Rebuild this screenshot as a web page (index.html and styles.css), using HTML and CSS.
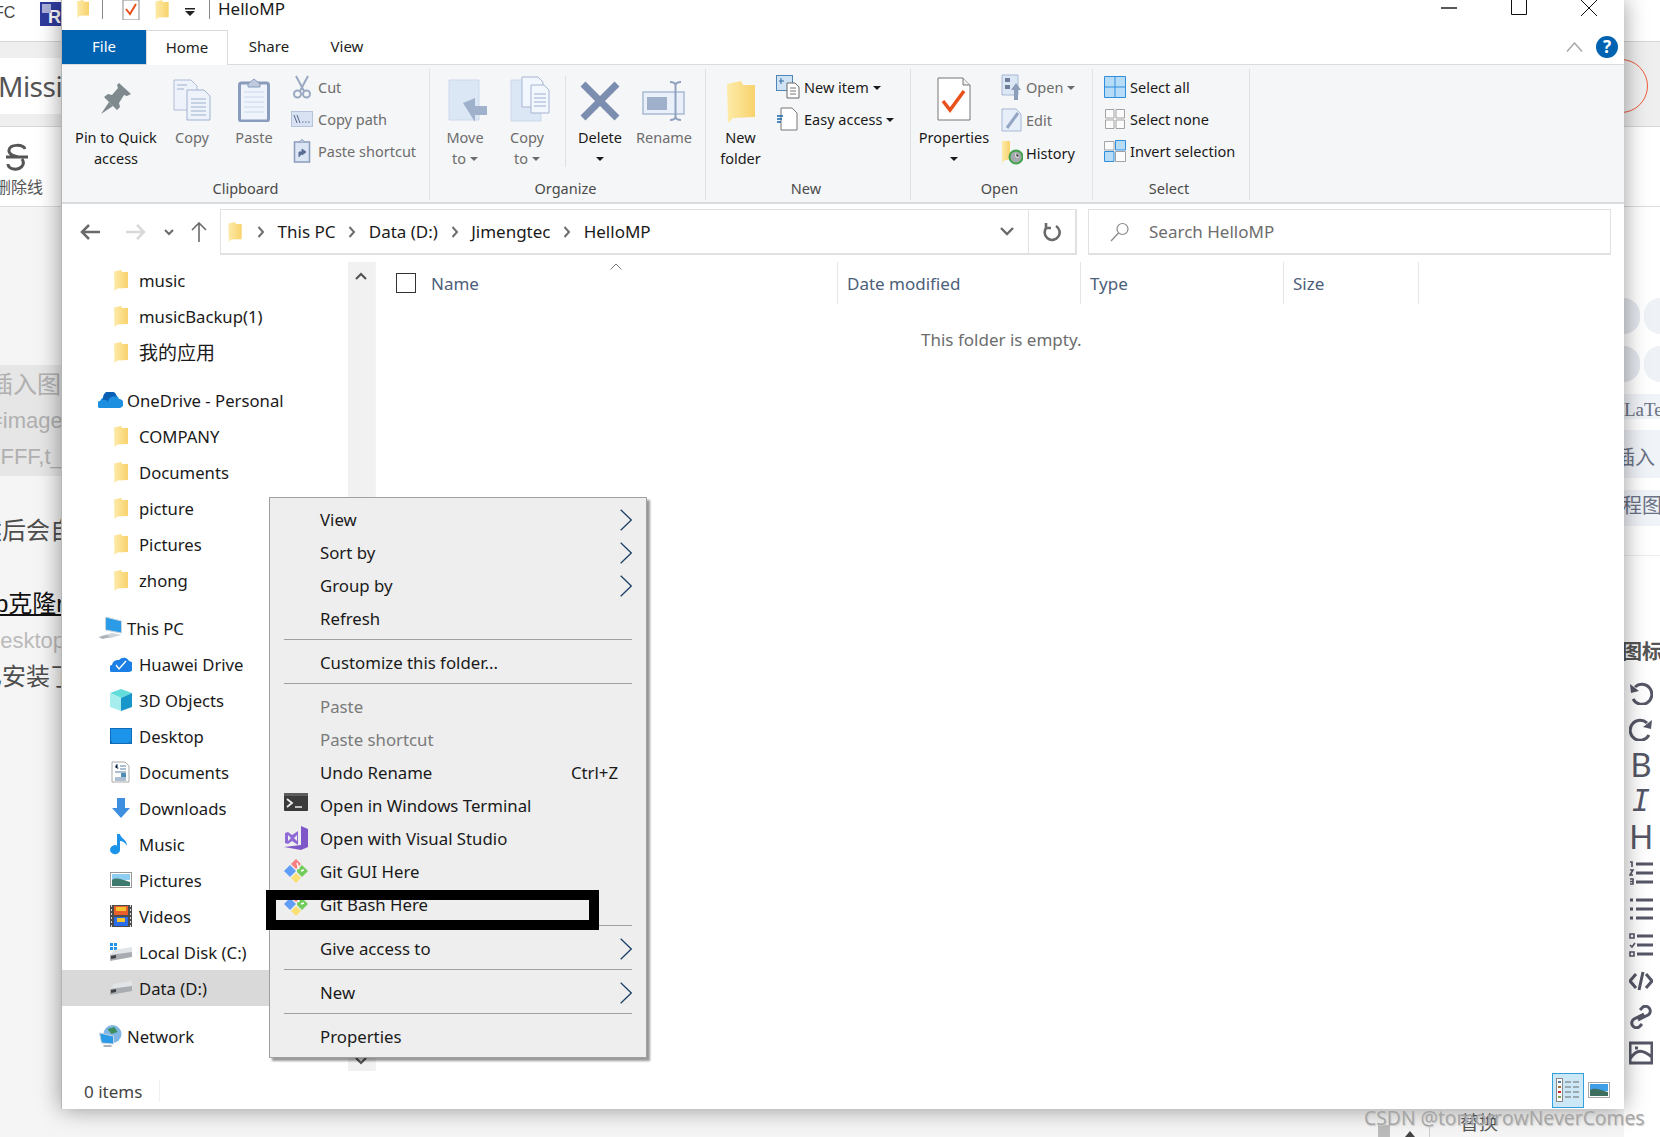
FILE: index.html
```html
<!DOCTYPE html>
<html lang="en">

<head>
    <meta charset="UTF-8">
    <title>HelloMP</title>
    <link rel="stylesheet" href="styles.css">
</head>

<body>
    <svg class="defs" aria-hidden="true">
        <defs>
            <linearGradient id="fold" x1="0" y1="0" x2="1" y2="0">
                <stop offset="0" stop-color="#fdeba9" />
                <stop offset="1" stop-color="#f8d26c" />
            </linearGradient>
            <symbol id="folder" viewBox="0 0 14 21">
                <path d="M0 1.500 L7 0 L8 2 H14 V18 L3 18.500 L0.500 21 Z" fill="url(#fold)" />
            </symbol>
            <symbol id="git" viewBox="0 0 24 24">
                <path d="M0 12 L6 6 L12 12 L6 18 Z" fill="#5f9df7" />
                <path d="M7 5 L12 0 L17 5 L12 10 Z" fill="#f87f7f" />
                <path d="M13 11 L18 6 L24 12 L18 18 L13 13 Z" fill="#72cc5c" />
                <path d="M7 19 L12 14 L17 19 L12 24 Z" fill="#fde073" />
                <path d="M13 4 L15 10 M17 12 L20 11" stroke="#fff" stroke-width="1.400" />
            </symbol>
            <symbol id="chev" viewBox="0 0 12 22">
                <path d="M0.700 0.700 L11.300 11 L0.700 21.300" fill="none" stroke="#1c3f66" stroke-width="1.300" />
            </symbol>
            <symbol id="crumb" viewBox="0 0 8 12">
                <path d="M1.500 1 L6 6 L1.500 11" fill="none" stroke="#6e6e6e" stroke-width="2" />
            </symbol>
            <symbol id="disk" viewBox="0 0 22 14">
                <path d="M4 3 L22 0 V6 L0 12 V8 Z" fill="#e2e5e8" />
                <path d="M0 8 L22 5 V10 L0 14 Z" fill="#a9adb2" />
                <path d="M1 9 L6 8 V11 L1 12 Z" fill="#3d4246" />
            </symbol>
        </defs>
    </svg>

    <!-- editor page behind the explorer window -->
    <div class="editor">
        <div class="ed-top">
            <span class="ed-fc">FC</span>
            <span class="ed-logo">R</span>
        </div>
        <div class="ed-title">
            <div class="ed-card">Missi</div>
            <div class="ed-ring"></div>
        </div>
        <div class="ed-tools">
            <div class="ed-strike">
                <svg width="24" height="28" viewBox="0 0 24 28">
                    <path d="M20 6 C18 1 5 1 4 7 C3 12 10 13 13 14 M1 14 H23 M17 16 C21 22 15 27 9 26 C6 26 3 24 3 21" fill="none" stroke="#555" stroke-width="3" />
                </svg>
                <span>删除线</span>
            </div>
        </div>
        <div class="ed-body">
            <div class="ed-left">
                <div class="ed-code">
                    <p class="cut-a">插入图片</p>
                    <p class="cut-b">=image</p>
                    <p class="cut-c">FFFF,t_</p>
                </div>
                <p class="ed-line ed-after">然后会自动</p>
                <p class="ed-line ed-clone"><u>b克隆r</u></p>
                <p class="ed-line ed-desk">desktop</p>
                <p class="ed-line ed-inst">已安装了</p>
            </div>
            <div class="ed-right">
                <div class="pill-row"><i></i><i></i></div>
                <div class="pill-row"><i></i><i></i></div>
                <div class="side-btn side-latex">LaTeX</div>
                <div class="side-btn side-insert">插入</div>
                <div class="side-btn side-flow">程图</div>
                <div class="side-rule"></div>
                <div class="side-head">图标</div>
                <div class="side-icons">
                    <svg viewBox="0 0 24 24"><path d="M6 6 A10 10 0 1 1 4 18" /><path d="M1 3 L2 12 L10 10 Z" class="solid" /></svg>
                    <svg viewBox="0 0 24 24"><path d="M18 6 A10 10 0 1 0 20 18" /><path d="M23 3 L22 12 L14 10 Z" class="solid" /></svg>
                    <b>B</b>
                    <b class="ital">I</b>
                    <b>H</b>
                    <svg viewBox="0 0 24 24"><path d="M7 3 H24 M7 12 H24 M7 21 H24" /><path d="M1 1 H3 V6 M1 9 H4 L1 14 H4 M1 18 H4 V23 H1 M1 20.500 H4" class="thin" /></svg>
                    <svg viewBox="0 0 24 24"><path d="M7 3 H24 M7 12 H24 M7 21 H24 M1 3 H4 M1 12 H4 M1 21 H4" /></svg>
                    <svg viewBox="0 0 24 24"><path d="M8 3 H24 M8 12 H24 M8 21 H24" /><path d="M1 1 H5 V5 H1 Z M1 19 H5 V23 H1 Z M1 12 L3 14 L6 10" class="thin" /></svg>
                    <svg viewBox="0 0 24 24"><path d="M7 5 L1 12 L7 19 M17 5 L23 12 L17 19 M14 3 L10 21" /></svg>
                    <svg viewBox="0 0 24 24"><path d="M9 15 L19 10 A4.500 4.500 0 0 0 14 2 L11 5 M15 9 L5 14 A4.500 4.500 0 0 0 10 22 L13 19" /></svg>
                    <svg viewBox="0 0 24 24"><path d="M1 2 H23 V22 H1 Z M1 18 C8 7 14 9 23 16 M6 7 H9" /></svg>
                </div>
            </div>
        </div>
    </div>

    <div class="watermark">CSDN @tomorrowNeverComes</div>
    <div class="replace">替换</div>
    <div class="under-bar"></div>
    <div class="under-tri"></div>
    <div class="under-rule"></div>

    <!-- explorer window -->
    <div class="window">
        <div class="titlebar">
            <div class="quick">
                <svg class="q-folder" width="14" height="18"><use href="#folder" /></svg>
                <span class="q-sep"></span>
                <svg class="q-check" width="18" height="20" viewBox="0 0 18 20">
                    <path d="M1 0 H17 V20 H1 Z" fill="#fff" stroke="#8b8b8b" />
                    <path d="M4 9 L8 14 L14 4" fill="none" stroke="#e8501c" stroke-width="2" />
                </svg>
                <svg class="q-folder2" width="14" height="20"><use href="#folder" /></svg>
                <svg class="q-drop" width="10" height="8" viewBox="0 0 10 8">
                    <path d="M0 0 H10 V1.500 H0 Z M0 3 H10 L5 8 Z" fill="#222" />
                </svg>
                <span class="q-sep"></span>
                <span class="win-name">HelloMP</span>
            </div>
            <div class="win-btns">
                <svg width="16" height="2" viewBox="0 0 16 2"><path d="M0 1 H16" stroke="#111" stroke-width="1.400" /></svg>
                <svg width="16" height="15" viewBox="0 0 16 15"><path d="M0.500 -1 H15.500 V14.500 H0.500 Z" fill="none" stroke="#111" /></svg>
                <svg width="16" height="16" viewBox="0 0 16 16"><path d="M0 0 L16 16 M16 0 L0 16" stroke="#111" /></svg>
            </div>
        </div>

        <div class="tabs">
            <div class="tab tab-file">File</div>
            <div class="tab tab-home">Home</div>
            <div class="tab tab-share">Share</div>
            <div class="tab tab-view">View</div>
            <div class="tabs-end">
                <svg width="17" height="10" viewBox="0 0 17 10"><path d="M1 9.500 L8.500 1 L16 9.500" fill="none" stroke="#a9a9a9" stroke-width="1.500" /></svg>
                <span class="help">?</span>
            </div>
        </div>

        <div class="ribbon">
            <div class="group g-clip">
                <div class="g-body">
                    <div class="big w-pin">
                        <svg width="32" height="32" viewBox="0 0 32 32">
                            <path d="M19 1 L31 12 L27 14 L24 13 L19 21 L20 25 L17 28 L4 15 L8 12 L12 13 L18 6 L17 3 Z" fill="#7f8a8f" />
                            <path d="M9 20 L1 32 L13 24 Z" fill="#7f8a8f" />
                        </svg>
                        <span>Pin to Quick<br>access</span>
                    </div>
                    <div class="big w-copy off">
                        <svg width="38" height="42" viewBox="0 0 38 42">
                            <path d="M1 1 H18 L24 7 V31 H1 Z" fill="#edf2fb" stroke="#aebcd6" />
                            <path d="M14 11 H31 L37 17 V41 H14 Z" fill="#edf2fb" stroke="#a2b2d1" />
                            <path d="M18 20 H33 M18 24 H33 M18 28 H33 M18 32 H33 M18 36 H33 M4 6 H14 M4 10 H11" stroke="#9fb0cd" />
                        </svg>
                        <span>Copy</span>
                    </div>
                    <div class="big w-paste off">
                        <svg width="32" height="44" viewBox="0 0 32 44">
                            <rect x="1.500" y="5" width="29" height="38" rx="2" fill="#eff3fb" stroke="#8a9cbc" stroke-width="3" />
                            <path d="M10 6 L16 1 L22 6 V9 H10 Z" fill="#c0cbdf" stroke="#8a9cbc" />
                            <path d="M6 14 H26 M6 19 H26 M6 24 H26 M6 29 H26 M6 34 H26" stroke="#ced8ea" />
                        </svg>
                        <span>Paste</span>
                    </div>
                    <div class="smalls s-clip">
                        <div class="small off">
                            <svg width="22" height="24" viewBox="0 0 22 24">
                                <path d="M5 1 L13 16 M17 1 L9 16" stroke="#9aa9c2" stroke-width="2" />
                                <circle cx="6.500" cy="19" r="3.500" fill="none" stroke="#9aa9c2" stroke-width="2" />
                                <circle cx="15.500" cy="19" r="3.500" fill="none" stroke="#9aa9c2" stroke-width="2" />
                            </svg>
                            <span>Cut</span>
                        </div>
                        <div class="small off">
                            <svg width="22" height="16" viewBox="0 0 22 16">
                                <rect x="0.500" y="0.500" width="21" height="15" fill="#d8e2f2" stroke="#b6c3da" />
                                <path d="M3 4 L6 12 M6 4 L9 12 M11 11 H12.500 M14 11 H15.500 M17 11 H18.500" stroke="#55678a" />
                            </svg>
                            <span>Copy path</span>
                        </div>
                        <div class="small off">
                            <svg width="22" height="24" viewBox="0 0 22 24">
                                <rect x="3.500" y="3" width="15" height="20" fill="#dce5f4" stroke="#8a9cbc" stroke-width="1.500" />
                                <path d="M8 3 L11 0.500 L14 3" fill="#c0cbdf" stroke="#8a9cbc" />
                                <path d="M8 18 V13 H13 M11 10 L15 13 L11 16 Z" fill="#5a6f94" stroke="#5a6f94" />
                            </svg>
                            <span>Paste shortcut</span>
                        </div>
                    </div>
                </div>
                <div class="g-label">Clipboard</div>
            </div>

            <div class="group g-org">
                <div class="g-body">
                    <div class="big w-move off">
                        <svg width="40" height="44" viewBox="0 0 40 44">
                            <path d="M1 1 H31 V41 H1 Z" fill="#dce7f6" stroke="#cbd8ec" />
                            <path d="M15 24 L27 19 V27 H39 V36 H27 V43 Z" fill="#9fb1cb" />
                        </svg>
                        <span>Move<br>to <em class="caret"></em></span>
                    </div>
                    <div class="big w-copyto off">
                        <svg width="40" height="46" viewBox="0 0 40 46">
                            <path d="M1 4 H31 V45 H1 Z" fill="#dce7f6" stroke="#cbd8ec" />
                            <path d="M12 1 H28 L33 6 V31 H12 Z" fill="#f2f6fd" stroke="#a6b5d2" />
                            <path d="M21 9 H34 L39 14 V37 H21 Z" fill="#f2f6fd" stroke="#a6b5d2" />
                            <path d="M24 18 H36 M24 22 H36 M24 26 H36 M24 30 H36" stroke="#9fb0cd" />
                        </svg>
                        <span>Copy<br>to <em class="caret"></em></span>
                    </div>
                    <div class="in-sep"></div>
                    <div class="big w-del">
                        <svg width="40" height="40" viewBox="0 0 40 40">
                            <path d="M3 3 L37 37 M37 3 L3 37" stroke="#7c8eaf" stroke-width="7" />
                        </svg>
                        <span>Delete<br><em class="caret dark"></em></span>
                    </div>
                    <div class="big w-ren off">
                        <svg width="44" height="40" viewBox="0 0 44 40">
                            <rect x="1" y="11" width="41" height="22" fill="#eaf0f9" stroke="#a9b9d4" stroke-width="1.500" />
                            <rect x="5" y="16" width="20" height="13" fill="#9fb0cb" />
                            <path d="M28 1 C31 1 33 2 33.500 4 C34 2 36 1 39 1 M33.500 4 V36 M28 39 C31 39 33 38 33.500 36 C34 38 36 39 39 39" fill="none" stroke="#8fa1bf" stroke-width="2" />
                        </svg>
                        <span>Rename</span>
                    </div>
                </div>
                <div class="g-label">Organize</div>
            </div>

            <div class="group g-new">
                <div class="g-body">
                    <div class="big w-newf">
                        <svg width="30" height="42"><use href="#folder" /></svg>
                        <span>New<br>folder</span>
                    </div>
                    <div class="smalls">
                        <div class="small">
                            <svg width="24" height="24" viewBox="0 0 24 24">
                                <rect x="0.500" y="0.500" width="16" height="15" fill="#cfe3f5" stroke="#4f86b5" />
                                <path d="M3 6 H8 M5 3 V9" stroke="#306a9c" />
                                <path d="M11 8 H19 L23 12 V23 H11 Z" fill="#fff" stroke="#666" />
                                <path d="M14 13 H20 M14 16 H20 M14 19 H20" stroke="#777" />
                            </svg>
                            <span>New item <em class="caret dark"></em></span>
                        </div>
                        <div class="small">
                            <svg width="24" height="24" viewBox="0 0 24 24">
                                <path d="M5 1 H16 L21 6 V23 H5 Z" fill="#fff" stroke="#777" />
                                <path d="M1 9 H7 M1 12 H6 M1 15 H5" stroke="#1565b0" stroke-width="1.500" />
                            </svg>
                            <span>Easy access <em class="caret dark"></em></span>
                        </div>
                    </div>
                </div>
                <div class="g-label">New</div>
            </div>

            <div class="group g-open">
                <div class="g-body">
                    <div class="big w-prop">
                        <svg width="34" height="44" viewBox="0 0 34 44">
                            <path d="M1 1 H26 L33 8 V43 H1 Z" fill="#fff" stroke="#777" />
                            <path d="M26 1 V8 H33" fill="#eee" stroke="#777" />
                            <path d="M6 24 L13 33 L27 14" fill="none" stroke="#e8501c" stroke-width="3.500" />
                        </svg>
                        <span>Properties<br><em class="caret dark"></em></span>
                    </div>
                    <div class="smalls s-open">
                        <div class="small off">
                            <svg width="22" height="26" viewBox="0 0 22 26">
                                <path d="M1 1 H17 V21 H1 Z" fill="#dce7f6" stroke="#a7b7d3" />
                                <path d="M4 4 H9 V8 H4 Z M4 11 H9 V15 H4 Z" fill="#6f7f9b" />
                                <path d="M10 16 L15 9 L20 16 H17 V26 H13 V16 Z" fill="#8c9dba" />
                            </svg>
                            <span>Open <em class="caret"></em></span>
                        </div>
                        <div class="small off">
                            <svg width="22" height="24" viewBox="0 0 22 24">
                                <path d="M1 1 H15 L20 6 V23 H1 Z" fill="#e6eefa" stroke="#a7b7d3" />
                                <path d="M6 20 L17 5" stroke="#93a5c3" stroke-width="3" />
                            </svg>
                            <span>Edit</span>
                        </div>
                        <div class="small">
                            <svg width="22" height="24" viewBox="0 0 22 24">
                                <path d="M1 0 H9 V18 L2 20 L1 24 Z" fill="url(#fold)" />
                                <circle cx="15" cy="16" r="6.500" fill="#a5a9ad" stroke="#3fa34a" stroke-width="2" />
                                <path d="M15 12 V16 H18" stroke="#fff" />
                            </svg>
                            <span>History</span>
                        </div>
                    </div>
                </div>
                <div class="g-label">Open</div>
            </div>

            <div class="group g-sel">
                <div class="g-body">
                    <div class="smalls">
                        <div class="small">
                            <svg width="22" height="22" viewBox="0 0 22 22">
                                <path d="M0.500 0.500 H21.500 V21.500 H0.500 Z M11 0 V22 M0 11 H22" fill="#b7dcf8" stroke="#2f8fdd" />
                            </svg>
                            <span>Select all</span>
                        </div>
                        <div class="small">
                            <svg width="22" height="22" viewBox="0 0 22 22">
                                <path d="M1.500 1.500 H10 V10 H1.500 Z M12 1.500 H20.500 V10 H12 Z M1.500 12 H10 V20.500 H1.500 Z M12 12 H20.500 V20.500 H12 Z" fill="#fbfbfb" stroke="#a3a3a3" />
                            </svg>
                            <span>Select none</span>
                        </div>
                        <div class="small">
                            <svg width="22" height="22" viewBox="0 0 22 22">
                                <path d="M0.500 1.500 H10 V10 H0.500 Z M11.500 11.500 H21.500 V21.500 H11.500 Z" fill="#fbfbfb" stroke="#a3a3a3" />
                                <path d="M11.500 0.500 H21.500 V10 H11.500 Z M0.500 11.500 H10 V21.500 H0.500 Z" fill="#b7dcf8" stroke="#2f8fdd" />
                            </svg>
                            <span>Invert selection</span>
                        </div>
                    </div>
                </div>
                <div class="g-label">Select</div>
            </div>
        </div>

        <div class="addressrow">
            <div class="nav-btns">
                <svg class="n-back" width="20" height="16" viewBox="0 0 20 16"><path d="M9 1 L2 8 L9 15 M2 8 H20" fill="none" stroke="#6a6a6a" stroke-width="2.500" /></svg>
                <svg class="n-fwd" width="20" height="16" viewBox="0 0 20 16"><path d="M11 1 L18 8 L11 15 M18 8 H0" fill="none" stroke="#d9d9d9" stroke-width="2.500" /></svg>
                <svg class="n-down" width="10" height="7" viewBox="0 0 10 7"><path d="M1 1 L5 5 L9 1" fill="none" stroke="#6a6a6a" stroke-width="2" /></svg>
                <svg class="n-up" width="16" height="20" viewBox="0 0 16 20"><path d="M1 8 L8 1 L15 8 M8 1 V20" fill="none" stroke="#6a6a6a" stroke-width="1.600" /></svg>
            </div>
            <div class="address">
                <svg class="addr-folder" width="14" height="20"><use href="#folder" /></svg>
                <svg class="crumb" width="8" height="12"><use href="#crumb" /></svg>
                <span>This PC</span>
                <svg class="crumb" width="8" height="12"><use href="#crumb" /></svg>
                <span>Data (D:)</span>
                <svg class="crumb" width="8" height="12"><use href="#crumb" /></svg>
                <span>Jimengtec</span>
                <svg class="crumb" width="8" height="12"><use href="#crumb" /></svg>
                <span>HelloMP</span>
                <div class="addr-end">
                    <div class="addr-drop">
                        <svg width="14" height="9" viewBox="0 0 14 9"><path d="M1 1 L7 7 L13 1" fill="none" stroke="#6a6a6a" stroke-width="2.400" /></svg>
                    </div>
                    <div class="addr-refresh">
                        <svg width="18" height="20" viewBox="0 0 18 20"><path d="M4 5 A7.500 7.500 0 1 0 13 4 M3 1 V6 H8" fill="none" stroke="#6a6a6a" stroke-width="2.600" /></svg>
                    </div>
                </div>
            </div>
            <div class="search">
                <svg width="20" height="20" viewBox="0 0 20 20">
                    <circle cx="12.500" cy="7" r="5.500" fill="none" stroke="#8a8a8a" stroke-width="1.200" />
                    <path d="M8.500 11 L1 19" stroke="#8a8a8a" stroke-width="1.200" />
                </svg>
                <span>Search HelloMP</span>
            </div>
        </div>

        <div class="content">
            <div class="nav">
                <div class="nav-list">
                    <div class="row child"><svg width="14" height="21"><use href="#folder" /></svg><span>music</span></div>
                    <div class="row child"><svg width="14" height="21"><use href="#folder" /></svg><span>musicBackup(1)</span></div>
                    <div class="row child"><svg width="14" height="21"><use href="#folder" /></svg><span class="cjk">我的应用</span></div>

                    <div class="row top gap">
                        <svg width="25" height="16" viewBox="0 0 25 16">
                            <path d="M3 16 A3.500 3.500 0 0 1 2 9 A6 6 0 0 1 9 5 A7 7 0 0 1 21 7 A4.500 4.500 0 0 1 21 16 Z" fill="#1c8fe0" />
                            <path d="M5 7 A7 7 0 0 1 19 5 A6 6 0 0 0 10 10 A4 4 0 0 0 5 8 Z" fill="#0a5fb4" />
                        </svg>
                        <span>OneDrive - Personal</span>
                    </div>
                    <div class="row child"><svg width="14" height="21"><use href="#folder" /></svg><span>COMPANY</span></div>
                    <div class="row child"><svg width="14" height="21"><use href="#folder" /></svg><span>Documents</span></div>
                    <div class="row child"><svg width="14" height="21"><use href="#folder" /></svg><span>picture</span></div>
                    <div class="row child"><svg width="14" height="21"><use href="#folder" /></svg><span>Pictures</span></div>
                    <div class="row child"><svg width="14" height="21"><use href="#folder" /></svg><span>zhong</span></div>

                    <div class="row top gap">
                        <svg width="25" height="22" viewBox="0 0 24 22">
                            <path d="M7 0 L23 4 V16 L7 13 Z" fill="#2b9be8" stroke="#c9d4dc" />
                            <path d="M2 19 L14 16 L23 18 L12 21 Z" fill="#cfd5da" />
                            <path d="M0 20 L8 18 L12 20 L4 22 Z" fill="#aab2b9" />
                        </svg>
                        <span>This PC</span>
                    </div>
                    <div class="row child wide">
                        <svg width="22" height="16" viewBox="0 0 22 16">
                            <path d="M3 16 A3.500 3.500 0 0 1 2 9 A6 6 0 0 1 9 4 A6 6 0 0 1 19 5 A5.500 5.500 0 0 1 18 16 Z" fill="#1c7fe6" />
                            <path d="M6 9 L9 13 L16 5" fill="none" stroke="#fff" stroke-width="1.400" />
                        </svg>
                        <span>Huawei Drive</span>
                    </div>
                    <div class="row child wide">
                        <svg width="22" height="22" viewBox="0 0 22 22">
                            <path d="M11 0 L22 4 L11 9 L0 4 Z" fill="#63dcdc" />
                            <path d="M0 4 L11 9 V22 L0 18 Z" fill="#a6eeee" />
                            <path d="M22 4 L11 9 V22 L22 18 Z" fill="#1796c9" />
                        </svg>
                        <span>3D Objects</span>
                    </div>
                    <div class="row child wide">
                        <svg width="22" height="16" viewBox="0 0 22 16">
                            <rect x="0.500" y="0.500" width="21" height="15" fill="#1c94ea" stroke="#0f6bb5" />
                            <path d="M1 14 H21" stroke="#06467d" stroke-dasharray="1 17" />
                        </svg>
                        <span>Desktop</span>
                    </div>
                    <div class="row child wide">
                        <svg width="22" height="22" viewBox="0 0 22 22">
                            <path d="M2 1 H15 L19 5 V21 H2 Z" fill="#fff" stroke="#a9a9a9" />
                            <path d="M5 6 L7 3 L8 8 M10 5 H16 M10 8 H16 M5 11 H16 M5 17 H16 M5 19 H16" stroke="#5a7fa5" />
                            <rect x="11" y="12" width="5" height="4" fill="#4f8db5" />
                        </svg>
                        <span>Documents</span>
                    </div>
                    <div class="row child wide">
                        <svg width="22" height="20" viewBox="0 0 22 20">
                            <path d="M7 0 H15 V10 H20 L11 20 L2 10 H7 Z" fill="#3f8fe0" />
                        </svg>
                        <span>Downloads</span>
                    </div>
                    <div class="row child wide">
                        <svg width="22" height="22" viewBox="0 0 22 22">
                            <path d="M10 1 V16 A5 4.500 0 1 1 7 12.500 V1 H10 C11 6 17 6 17 13 C15 9 12 8 10 8" fill="#1c94ea" />
                        </svg>
                        <span>Music</span>
                    </div>
                    <div class="row child wide">
                        <svg width="22" height="16" viewBox="0 0 22 16">
                            <rect x="0.500" y="0.500" width="21" height="15" fill="#fff" stroke="#9a9a9a" />
                            <rect x="2" y="2" width="18" height="6" fill="#8ecdf2" />
                            <path d="M2 8 C6 5 10 7 20 10 V14 H2 Z" fill="#3f7a6f" />
                        </svg>
                        <span>Pictures</span>
                    </div>
                    <div class="row child wide">
                        <svg width="22" height="22" viewBox="0 0 22 22">
                            <rect width="22" height="22" fill="#4b4b4b" />
                            <rect x="4" y="1" width="14" height="9" fill="#e85f2b" />
                            <rect x="4" y="12" width="14" height="9" fill="#2b6de8" />
                            <path d="M6 2 H16 V6 H6 Z M7 13 H15 V17 H7 Z" fill="#f4c430" />
                            <path d="M1.500 0 V22 M20.500 0 V22" stroke="#ddd" stroke-dasharray="2 2" />
                        </svg>
                        <span>Videos</span>
                    </div>
                    <div class="row child wide">
                        <svg width="22" height="18" viewBox="0 0 22 18">
                            <path d="M0 0 H3 V3 H0 Z M4 0 H7 V3 H4 Z M0 4 H3 V7 H0 Z M4 4 H7 V7 H4 Z" fill="#1c94ea" />
                            <g transform="translate(0 4)"><use href="#disk" width="22" height="14" /></g>
                        </svg>
                        <span>Local Disk (C:)</span>
                    </div>
                    <div class="row child wide active">
                        <svg width="22" height="14"><use href="#disk" /></svg>
                        <span>Data (D:)</span>
                    </div>

                    <div class="row top gap">
                        <svg width="25" height="22" viewBox="0 0 22 22">
                            <circle cx="13" cy="9" r="9" fill="#7fb6e6" />
                            <path d="M8 4 L15 2 L18 7 L12 9 Z" fill="#3c8f5a" />
                            <path d="M0 8 L14 11 V19 L2 18 Z" fill="#2b9be8" stroke="#c9d4dc" />
                            <path d="M4 20 H12 V22 H4 Z" fill="#aab2b9" />
                        </svg>
                        <span>Network</span>
                    </div>
                </div>
                <div class="scroll">
                    <svg width="12" height="8" viewBox="0 0 12 8"><path d="M1 7 L6 2 L11 7" fill="none" stroke="#555" stroke-width="2.200" /></svg>
                    <svg width="12" height="8" viewBox="0 0 12 8"><path d="M1 1 L6 6 L11 1" fill="none" stroke="#555" stroke-width="2.200" /></svg>
                </div>
            </div>

            <div class="files">
                <div class="heads">
                    <div class="head h-name">
                        <span class="box"></span>
                        <span>Name</span>
                        <svg class="sort" width="12" height="7" viewBox="0 0 12 7"><path d="M0.500 6.500 L6 1 L11.500 6.500" fill="none" stroke="#7a7a7a" /></svg>
                    </div>
                    <div class="head h-date">Date modified</div>
                    <div class="head h-type">Type</div>
                    <div class="head h-size">Size</div>
                </div>
                <div class="empty">This folder is empty.</div>
            </div>
        </div>

        <div class="statusbar">
            <span class="count">0 items</span>
            <div class="views">
                <div class="view-on">
                    <svg width="24" height="24" viewBox="0 0 24 24">
                        <rect x="0.500" y="0.500" width="6" height="23" fill="#fff" stroke="#8a8a8a" />
                        <path d="M2 3 H5 V5 H2 Z" fill="#4b7fa8" />
                        <path d="M2 8 H5 V10 H2 Z" fill="#a06d3a" />
                        <path d="M2 13 H5 V15 H2 Z" fill="#d02020" />
                        <path d="M2 18 H5 V20 H2 Z" fill="#7fa04b" />
                        <path d="M9 4 H15 M17 4 H23 M9 9 H15 M17 9 H23 M9 14 H15 M17 14 H23 M9 19 H15 M17 19 H23" stroke="#6a6a6a" />
                    </svg>
                </div>
                <svg width="22" height="16" viewBox="0 0 22 16">
                    <rect x="0.500" y="0.500" width="21" height="15" fill="#fff" stroke="#a9a9a9" />
                    <rect x="2" y="2" width="18" height="7" fill="#3e9fe6" />
                    <path d="M2 8 C7 5 12 8 20 10 V14 H2 Z" fill="#3f6f5f" />
                </svg>
            </div>
        </div>
    </div>

    <!-- right click menu -->
    <div class="menu">
        <div class="mi"><span>View</span><svg width="12" height="22"><use href="#chev" /></svg></div>
        <div class="mi"><span>Sort by</span><svg width="12" height="22"><use href="#chev" /></svg></div>
        <div class="mi"><span>Group by</span><svg width="12" height="22"><use href="#chev" /></svg></div>
        <div class="mi"><span>Refresh</span></div>
        <div class="msep"></div>
        <div class="mi"><span>Customize this folder...</span></div>
        <div class="msep"></div>
        <div class="mi dis"><span>Paste</span></div>
        <div class="mi dis"><span>Paste shortcut</span></div>
        <div class="mi"><span>Undo Rename</span><kbd>Ctrl+Z</kbd></div>
        <div class="mi">
            <svg class="mi-ico" width="24" height="18" viewBox="0 0 24 18">
                <rect width="24" height="18" rx="1" fill="#3a3a3a" />
                <rect width="24" height="3" fill="#5c5c5c" />
                <path d="M3 6 L8 10 L3 14" fill="none" stroke="#eee" stroke-width="1.800" />
                <path d="M11 14 H18" stroke="#eee" stroke-width="1.500" />
            </svg>
            <span>Open in Windows Terminal</span>
        </div>
        <div class="mi">
            <svg class="mi-ico" width="24" height="24" viewBox="0 0 24 24">
                <path d="M17 0 L24 3 V21 L17 24 L0 21 L17 19 Z" fill="#7e57c9" />
                <path d="M1 7 L4 6 L8 9 L14 5 V19 L8 15 L4 18 L1 17 Z M4 9 V15 L7 12 Z M10 12 L13 15 V9 Z" fill="#8f6ad6" fill-rule="evenodd" />
            </svg>
            <span>Open with Visual Studio</span>
        </div>
        <div class="mi"><svg class="mi-ico" width="24" height="24"><use href="#git" /></svg><span>Git GUI Here</span></div>
        <div class="mi"><svg class="mi-ico" width="24" height="24"><use href="#git" /></svg><span>Git Bash Here</span></div>
        <div class="msep"></div>
        <div class="mi"><span>Give access to</span><svg width="12" height="22"><use href="#chev" /></svg></div>
        <div class="msep"></div>
        <div class="mi"><span>New</span><svg width="12" height="22"><use href="#chev" /></svg></div>
        <div class="msep"></div>
        <div class="mi"><span>Properties</span></div>
    </div>

    <div class="redact"></div>
</body>

</html>
```

FILE: styles.css
```css
* {
    box-sizing: border-box;
}

body {
    margin: 0;
    width: 1660px;
    height: 1137px;
    position: relative;
    overflow: hidden;
    background: #f5f5f5;
    font-family: "Noto Sans", "Noto Sans CJK SC", sans-serif;
    color: #1a1a1a;
}

p {
    margin: 0;
}

em {
    font-style: normal;
}

svg {
    flex: none;
    display: block;
}

.defs {
    position: absolute;
    width: 0;
    height: 0;
}

/* page behind */
.editor {
    height: 100%;
    display: flex;
    flex-direction: column;
    font-family: "Liberation Sans", "Noto Sans CJK SC", sans-serif;
}

.ed-top {
    height: 42px;
    flex: none;
    background: #fff;
    border-bottom: 1px solid #d5d5d5;
    display: flex;
    align-items: flex-start;
    overflow: hidden;
}

.ed-fc {
    font-size: 16px;
    margin: 4px 0 0 -6px;
    width: 46px;
    color: #444;
}

.ed-logo {
    position: relative;
    width: 21px;
    height: 24px;
    margin-top: 2px;
    padding-top: 5px;
    background: #2e3b9e;
    color: #fff;
    font-weight: bold;
    font-size: 18px;
    line-height: 20px;
    text-align: right;
}

.ed-logo::before {
    content: "";
    position: absolute;
    left: 2px;
    top: 2px;
    width: 9px;
    height: 9px;
    background: #aab0d8;
}

.ed-title {
    height: 85px;
    flex: none;
    background: #efefef;
    border-bottom: 1px solid #d8d8d8;
    display: flex;
    justify-content: space-between;
    align-items: center;
}

.ed-card {
    width: 80px;
    height: 56px;
    margin-top: 4px;
    padding-left: 0;
    background: #fff;
    border-radius: 0 8px 8px 0;
    font: 28px/56px "Noto Sans", sans-serif;
    color: #555;
    letter-spacing: -0.5px;
    text-indent: -2px;
}

.ed-ring {
    width: 54px;
    height: 54px;
    margin: 4px 12px 0 0;
    border-radius: 50%;
    border: 1px solid #ee5a3a;
}

.ed-tools {
    height: 80px;
    flex: none;
    background: #fff;
    border-bottom: 1px solid #ddd;
}

.ed-strike {
    width: 60px;
    padding: 16px 0 0 5px;
    overflow: hidden;
}

.ed-strike span {
    display: block;
    margin: 3px 0 0 -10px;
    font-size: 16px;
    white-space: nowrap;
    color: #555;
}

.ed-body {
    flex: 1;
    display: flex;
    justify-content: space-between;
}

.ed-left {
    width: 61px;
    overflow: hidden;
    white-space: nowrap;
    font-size: 24px;
}

.ed-code {
    margin-top: 158px;
    height: 111px;
    background: #e6e6e6;
    color: #b0b0b0;
    padding-top: 2px;
    line-height: 36px;
}

.cut-a {
    margin-left: -11px;
}

.cut-b {
    margin-left: -10px;
    font-size: 22px;
}

.cut-c {
    margin-left: -13px;
    font-size: 22px;
}

.ed-line {
    line-height: 36px;
    color: #4d4d4d;
}

.ed-after {
    margin: 37px 0 0 -22px;
}

.ed-clone {
    margin: 37px 0 0 -5px;
    color: #111;
}

.ed-desk {
    margin: 1px 0 0 -12px;
    color: #bbb;
    font-size: 22px;
}

.ed-inst {
    margin: 0 0 0 -22px;
}

.ed-right {
    width: 36px;
    overflow: hidden;
    background: #fff;
    padding-top: 91px;
    font-family: "Liberation Serif", "Noto Sans CJK SC", serif;
}

.pill-row {
    display: flex;
    justify-content: space-between;
    height: 36px;
    margin-bottom: 12px;
}

.pill-row i {
    width: 16px;
    height: 36px;
    background: #eef1f6;
}

.pill-row i:first-child {
    background: #e3e7ed;
    border-radius: 0 18px 18px 0;
}

.pill-row i:last-child {
    border-radius: 18px 0 0 18px;
}

.side-btn {
    background: #f0f3f8;
    color: #6a7285;
    white-space: nowrap;
    font-size: 19px;
}

.side-latex {
    height: 25px;
    line-height: 31px;
    margin-bottom: 11px;
    overflow: hidden;
}

.side-insert {
    height: 48px;
    line-height: 56px;
    font-size: 20px;
    margin-bottom: 12px;
    text-indent: -9px;
}

.side-flow {
    height: 36px;
    line-height: 32px;
    font-size: 20px;
    text-indent: -2px;
}

.side-rule {
    height: 1px;
    background: #eee;
    margin-top: 29px;
}

.side-head {
    margin-top: 83px;
    font: bold 20px "Noto Sans CJK SC", sans-serif;
    color: #555;
    line-height: 24px;
    white-space: nowrap;
    text-indent: -2px;
}

.side-icons {
    margin-top: 18px;
    display: flex;
    flex-direction: column;
    align-items: flex-start;
    padding-left: 5px;
    gap: 12px;
    color: #555666;
}

.side-icons svg {
    width: 24px;
    height: 24px;
    fill: none;
    stroke: #555666;
    stroke-width: 3;
}

.side-icons svg .thin {
    stroke-width: 1.600;
}

.side-icons svg .solid {
    fill: #555666;
    stroke: none;
}

.side-icons b {
    height: 24px;
    width: 24px;
    font: 400 33px/24px "Noto Sans", sans-serif;
    text-align: center;
}

.side-icons .ital {
    font-family: "DejaVu Sans Mono", monospace;
    font-style: italic;
    font-size: 30px;
}

.watermark {
    position: absolute;
    left: 1364px;
    top: 1104px;
    font: 19.400px/28px "Open Sans", sans-serif;
    color: #a5a5a5;
    text-shadow: 1px 1px 1px #c8c8c8;
    z-index: 3;
    white-space: nowrap;
}

.replace {
    position: absolute;
    left: 1460px;
    top: 1108px;
    font: 19px/28px "Noto Sans CJK SC", sans-serif;
    color: #555;
}

.under-bar {
    position: absolute;
    left: 1378px;
    top: 1125px;
    width: 12px;
    height: 12px;
    background: #bbb;
}

.under-tri {
    position: absolute;
    left: 1405px;
    top: 1131px;
    border-left: 5px solid transparent;
    border-right: 5px solid transparent;
    border-bottom: 6px solid #444;
}

.under-rule {
    position: absolute;
    left: 1429px;
    top: 1125px;
    width: 1px;
    height: 12px;
    background: #ccc;
}

/* explorer window */
.window {
    position: absolute;
    left: 61px;
    top: 0;
    width: 1563px;
    height: 1109px;
    display: flex;
    flex-direction: column;
    background: #fff;
    border-left: 1px solid #b5b5b5;
    box-shadow: 0 0 22px rgba(0, 0, 0, 0.4);
    font-size: 17px;
}

.titlebar {
    height: 30px;
    flex: none;
    display: flex;
    justify-content: space-between;
}

.quick {
    display: flex;
    align-items: flex-start;
}

.q-folder {
    margin: 0 0 0 14px;
}

.q-sep {
    width: 1px;
    height: 19px;
    background: #8a8a8a;
}

.quick .q-sep:nth-of-type(1) {
    margin-left: 12px;
}

.q-check {
    margin-left: 19px;
}

.q-folder2 {
    margin-left: 15px;
}

.q-drop {
    margin: 8px 14px 0 16px;
}

.win-name {
    margin-left: 8px;
    font-size: 17px;
    line-height: 17px;
}

.win-btns {
    display: flex;
    align-items: flex-start;
    gap: 54px;
    padding-right: 27px;
}

.win-btns svg:first-child {
    margin-top: 7px;
}

.tabs {
    height: 35px;
    flex: none;
    display: flex;
    border-bottom: 1px solid #dadbdc;
    font-size: 15px;
    color: #222;
}

.tab {
    line-height: 33px;
    text-align: center;
}

.tab-file {
    width: 84px;
    height: 34px;
    background: #0063b1;
    color: #fff;
}

.tab-home {
    width: 82px;
    height: 35px;
    background: #fff;
    border: 1px solid #dadbdc;
    border-bottom: 0;
}

.tab-share {
    width: 82px;
}

.tab-view {
    width: 74px;
}

.tabs-end {
    margin-left: auto;
    padding-right: 6px;
    display: flex;
    align-items: center;
    gap: 13px;
}

.help {
    width: 22px;
    height: 22px;
    border-radius: 50%;
    background: #0063b1;
    color: #fff;
    font: bold 17px/22px "Noto Sans", sans-serif;
    text-align: center;
}

.ribbon {
    height: 139px;
    flex: none;
    display: flex;
    background: #f5f6f7;
    border-bottom: 2px solid #dadbdc;
    font-size: 14.500px;
    padding-top: 4px;
}

.group {
    position: relative;
    height: 131px;
    display: flex;
    flex-direction: column;
    border-right: 1px solid #e1e2e3;
    flex: none;
}

.g-body {
    height: 107px;
    display: flex;
}

.g-label {
    height: 24px;
    line-height: 24px;
    text-align: center;
    color: #4a4a4a;
}

.g-org .g-label,
.g-new .g-label,
.g-open .g-label,
.g-sel .g-label {
    padding-right: 4px;
}

.g-clip {
    width: 368px;
}

.g-org {
    width: 276px;
}

.g-new {
    width: 205px;
}

.g-open {
    width: 182px;
}

.g-sel {
    width: 157px;
}

.big {
    position: relative;
    height: 106px;
    flex: none;
    display: flex;
    flex-direction: column;
    align-items: center;
    text-align: center;
    line-height: 21px;
    padding-top: 8px;
}

.big span {
    position: absolute;
    top: 58px;
    white-space: nowrap;
}

.off {
    color: #6d6d6d;
}

.w-pin {
    width: 108px;
    padding-top: 13px;
}

.w-copy {
    width: 44px;
    padding-top: 10px;
}

.w-paste {
    width: 80px;
    padding-top: 9px;
}

.s-clip {
    margin-left: -4px;
}

.s-clip .small {
    gap: 5px;
}

.w-move {
    width: 60px;
    margin-left: 5px;
    padding-top: 10px;
}

.w-copyto {
    width: 64px;
    padding-top: 7px;
}

.w-move svg,
.w-copyto svg {
    margin-left: 6px;
}

.in-sep {
    width: 1px;
    height: 91px;
    margin: 7px 0 0 6px;
    background: #dfe0e1;
}

.w-del {
    width: 68px;
    padding-top: 12px;
}

.w-ren {
    width: 60px;
    padding-top: 12px;
}

.w-newf {
    width: 69px;
    padding-top: 12px;
}

.w-prop {
    width: 86px;
    padding-top: 8px;
}

.caret {
    display: inline-block;
    width: 0;
    height: 0;
    border-left: 4px solid transparent;
    border-right: 4px solid transparent;
    border-top: 4px solid #6d6d6d;
    vertical-align: 3px;
}

.caret.dark {
    border-top-color: #1a1a1a;
}

.smalls {
    display: flex;
    flex-direction: column;
    padding-top: 2px;
}

.small {
    height: 32px;
    display: flex;
    align-items: center;
    gap: 4px;
    white-space: nowrap;
}

.small svg {
    margin-left: 1px;
}

.s-open {
    padding-top: 1px;
}

.s-open .small {
    height: 33px;
    gap: 3px;
}

.s-open .small svg {
    margin-left: 4px;
}

.g-sel .smalls {
    padding-left: 10px;
}

.addressrow {
    height: 58px;
    flex: none;
    display: flex;
    padding: 5px 12px 7px 0;
}

.nav-btns {
    width: 158px;
    flex: none;
    display: flex;
    align-items: center;
    padding-left: 18px;
}

.n-fwd {
    margin-left: 26px;
}

.n-down {
    margin-left: 18px;
}

.n-up {
    margin-left: 17px;
}

.address {
    width: 857px;
    flex: none;
    display: flex;
    align-items: center;
    border: 2px solid #e1e1e1;
    border-width: 1px 2px 2px 1px;
    padding-left: 7px;
}

.addr-folder {
    margin-right: 15px;
}

.crumb {
    margin: 0 12.600px;
}

.addr-folder + .crumb {
    margin-left: 0;
}

.addr-end {
    margin-left: auto;
    height: 100%;
    display: flex;
}

.addr-drop {
    width: 47px;
    display: flex;
    align-items: center;
    justify-content: center;
    padding-left: 3px;
    border-right: 1px solid #e1e1e1;
}

.addr-refresh {
    width: 46px;
    display: flex;
    align-items: center;
    justify-content: center;
}

.search {
    width: 523px;
    flex: none;
    margin-left: 11px;
    display: flex;
    align-items: center;
    padding-left: 21px;
    gap: 19px;
    border: 1px solid #e1e1e1;
    border-bottom-width: 2px;
    color: #6d6d6d;
}

.content {
    flex: 1;
    display: flex;
    min-height: 0;
}

.nav {
    width: 314px;
    flex: none;
    display: flex;
    border-right: 3px solid #f3f3f3;
}

.nav-list {
    width: 286px;
    flex: none;
}

.row {
    height: 36px;
    display: flex;
    align-items: center;
    white-space: nowrap;
    font-size: 16.700px;
}

.row .cjk {
    font-size: 19px;
}

.row.gap {
    margin-top: 12px;
}

.row.child {
    padding-left: 52px;
}

.row.child span {
    margin-left: 11px;
}

.row.child.wide {
    padding-left: 48px;
}

.row.child.wide span {
    margin-left: 7px;
}

.row.top {
    padding-left: 36px;
}

.row.top span {
    margin-left: 4px;
}

.row.active {
    background: #d9d9d9;
}

.scroll {
    flex: 1;
    background: #f1f1f1;
    display: flex;
    flex-direction: column;
    justify-content: space-between;
    align-items: center;
    padding: 10px 0 6px;
}

.files {
    flex: 1;
    min-width: 0;
}

.heads {
    height: 42px;
    display: flex;
    color: #4c607a;
}

.head {
    flex: none;
    display: flex;
    align-items: center;
    border-right: 1px solid #e5e5e5;
    padding-left: 9px;
}

.h-name {
    width: 462px;
    position: relative;
    padding-left: 20px;
    gap: 15px;
}

.sort {
    position: absolute;
    left: 234px;
    top: 1px;
}

.box {
    width: 20px;
    height: 20px;
    border: 1px solid #333;
}

.h-date {
    width: 243px;
}

.h-type {
    width: 203px;
}

.h-size {
    width: 135px;
}

.empty {
    margin: 24px 0 0 545px;
    color: #6d6d6d;
    line-height: 24px;
}

.statusbar {
    height: 38px;
    flex: none;
    display: flex;
    justify-content: space-between;
    font-size: 17px;
    color: #444;
}

.count {
    width: 75px;
    height: 20px;
    margin-top: 9px;
    margin-left: 22px;
    padding-top: 2px;
    line-height: 20px;
    box-sizing: content-box;
    border-right: 1px solid #f0f0f0;
    white-space: nowrap;
}

.views {
    display: flex;
    align-items: center;
    gap: 4px;
    padding-right: 14px;
}

.view-on {
    width: 32px;
    height: 35px;
    background: #cce8f6;
    border: 1px solid #32a0de;
    display: flex;
    align-items: center;
    justify-content: center;
}

/* context menu */
.menu {
    position: absolute;
    left: 269px;
    top: 497px;
    width: 378px;
    height: 561px;
    padding: 5px 14px 0;
    background: #eeeeee;
    border: 1px solid #a0a0a0;
    box-shadow: 3px 3px 2px rgba(0, 0, 0, 0.4);
    font-size: 16.800px;
    z-index: 2;
}

.mi {
    position: relative;
    height: 33px;
    display: flex;
    align-items: center;
    justify-content: space-between;
    padding-left: 36px;
    color: #1a1a1a;
}

.mi-ico {
    position: absolute;
    left: 0;
    top: 4px;
}

.mi kbd {
    font: inherit;
    margin-right: 14px;
}

.mi.dis {
    color: #7a7a7a;
}

.msep {
    height: 1px;
    margin: 4px 0 6px;
    background: #a0a0a0;
}

.redact {
    position: absolute;
    left: 266px;
    top: 890px;
    width: 333px;
    height: 40px;
    border: 10px solid #000;
    z-index: 3;
}
```
